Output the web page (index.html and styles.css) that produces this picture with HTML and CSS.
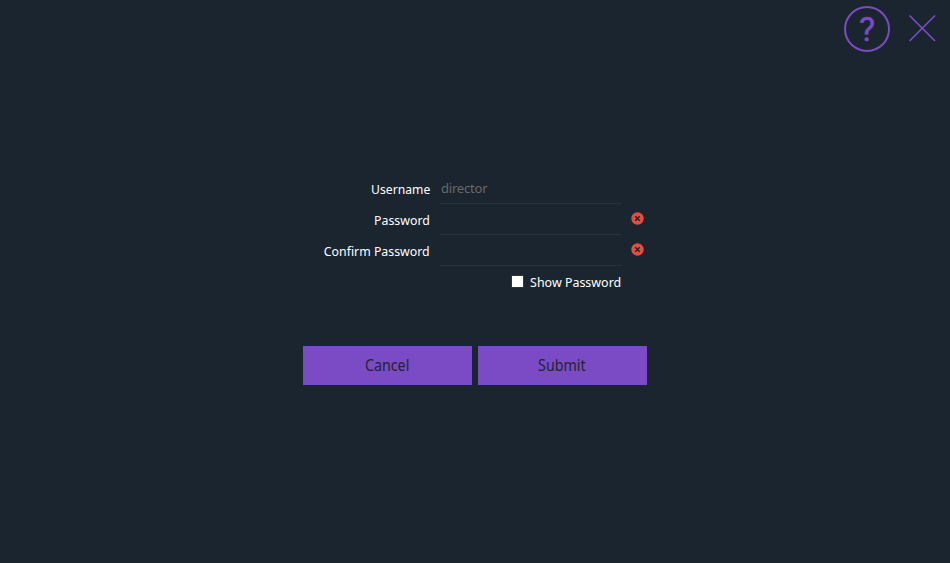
FILE: index.html
```html
<!DOCTYPE html>
<html lang="en">
<head>
<meta charset="utf-8">
<title>Set password</title>
<link rel="stylesheet" href="styles.css">
</head>
<body>
<header class="toolbar">
  <button class="help" type="button" aria-label="Help">?</button>
  <button class="close" type="button" aria-label="Close">
    <svg width="28" height="28" viewBox="0 0 28 28"><path d="M1.5 1.5L27 27M27 1.5L1.5 27"/></svg>
  </button>
</header>
<form class="form">
  <div class="row">
    <label for="user"><span class="text text-user">Username</span></label>
    <input id="user" class="field" type="text" value="director" disabled>
  </div>
  <div class="row">
    <label for="pass"><span class="text">Password</span></label>
    <input id="pass" class="field" type="password">
    <svg class="error" viewBox="0 0 13 13"><circle cx="6.5" cy="6.5" r="6.2"/><path d="M4.3 4.3L8.7 8.7M8.7 4.3L4.3 8.7"/></svg>
  </div>
  <div class="row">
    <label for="confirm"><span class="text">Confirm Password</span></label>
    <input id="confirm" class="field" type="password">
    <svg class="error" viewBox="0 0 13 13"><circle cx="6.5" cy="6.5" r="6.2"/><path d="M4.3 4.3L8.7 8.7M8.7 4.3L4.3 8.7"/></svg>
  </div>
  <label class="show"><input type="checkbox" class="check"><span class="text text-show">Show Password</span></label>
  <div class="actions">
    <button class="action" type="button"><span class="caption">Cancel</span></button>
    <button class="action" type="button"><span class="caption">Submit</span></button>
  </div>
</form>
</body>
</html>
```
FILE: styles.css
```css
* { box-sizing: border-box; }
body {
  margin: 0;
  height: 563px;
  overflow: hidden;
  background: #1b2530;
  color: #fff;
  font: 13px/18px "Noto Sans", sans-serif;
}
button { margin: 0; padding: 0; border: 0; background: none; }
.toolbar {
  display: flex;
  justify-content: flex-end;
  align-items: flex-start;
  gap: 18px;
  height: 173px;
  padding: 6px 14px 0 0;
}
.help {
  width: 46px;
  height: 46px;
  border: 2px solid #7a4bc4;
  border-radius: 50%;
  color: #7a4bc4;
  font: 34px/42px Roboto, sans-serif;
  -webkit-text-stroke: 0.5px #7a4bc4;
}
.close { width: 28px; height: 28px; margin-top: 8px; }
.close svg { display: block; fill: none; stroke: #7a4bc4; stroke-width: 1.7; }
.form { width: 344px; margin: 0 auto; }
.row {
  display: grid;
  grid-template-columns: 127px 182px 13px;
  column-gap: 10px;
  height: 31px;
}
.row label { padding-top: 7px; text-align: right; white-space: nowrap; }
.text {
  display: inline-block;
  transform: scaleX(0.948);
  transform-origin: right;
}
.text-user { transform: scaleX(0.935); }
.text-show { transform: scaleX(0.957); }
.field {
  width: 182px;
  height: 31px;
  padding: 0 1px;
  border: 0;
  border-bottom: 1px solid #26323f;
  outline: 0;
  background: transparent;
  color: #696969;
  font: inherit;
  letter-spacing: -0.2px;
}
.error { width: 13px; height: 13px; margin: 8px 0 0 -1px; }
.error circle { fill: #e74c3c; }
.error path { fill: none; stroke: #1c2531; stroke-width: 1.5; }
.show {
  display: flex;
  justify-content: flex-end;
  align-items: flex-start;
  gap: 2px;
  width: 318px;
  height: 80px;
  padding-top: 7px;
}
.check {
  appearance: none;
  width: 13px;
  height: 13px;
  margin: 2px 0 0;
  border: 1px solid #333;
  background: #fff;
}
.actions { display: flex; gap: 6px; }
.action {
  width: 169px;
  height: 39px;
  background: #7a4bc4;
  color: #1c2531;
  font: 15.5px/39px "Noto Sans", sans-serif;
}
.caption {
  display: inline-block;
  margin-right: 1px;
  transform: scaleX(0.92);
}
```
